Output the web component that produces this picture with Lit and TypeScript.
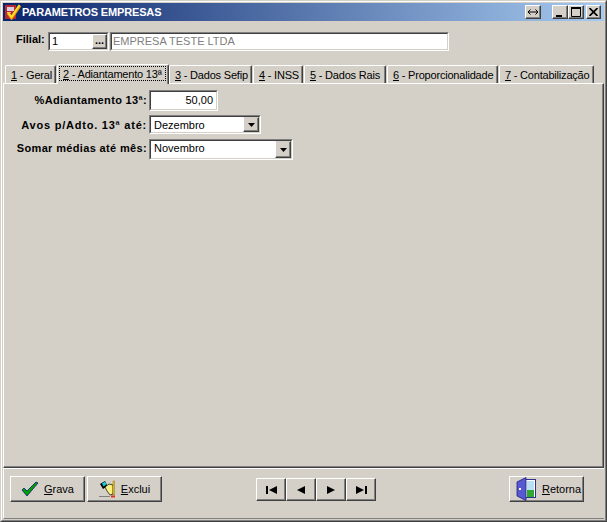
import { LitElement, html, css } from "lit";
import { customElement } from "lit/decorators.js";

const tabs = [
  ["1", "\u00a0- Geral", 51],
  ["2", "\u00a0- Adiantamento 13ª", 112],
  ["3", "\u00a0- Dados Sefip", 83],
  ["4", "\u00a0- INSS", 50],
  ["5", "\u00a0- Dados Rais", 82],
  ["6", "\u00a0- Proporcionalidade", 111],
  ["7", "\u00a0- Contabilização", 95],
] as const;

@customElement("app-root")
export class AppRoot extends LitElement {
  static styles = css`
    :host { display: block; width: 607px; height: 522px; font-family: "Liberation Sans", Arial, sans-serif; font-size: 11px; color: #000; }
    * { box-sizing: border-box; }
    .win { width: 607px; height: 522px; background: #d4d0c8; border: 1px solid; border-color: #d4d0c8 #404040 #404040 #d4d0c8; display: flex; }
    .win2 { flex: 1; border: 1px solid; border-color: #fff #808080 #808080 #fff; padding: 1px; display: flex; flex-direction: column; min-width: 0; }
    .title { height: 18px; flex: none; background: linear-gradient(90deg, #0a246a, #a6caf0); display: flex; align-items: center; padding: 0 3px 0 2px; color: #fff; font-weight: bold; font-size: 11px; }
    .title svg.logo { flex: none; margin-right: 1px; }
    .ttext { flex: 1; letter-spacing: -0.15px; }
    .wbtn { width: 16px; height: 14px; background: #d4d0c8; border: 1px solid; border-color: #fff #404040 #404040 #fff; box-shadow: inset -1px -1px 0 #808080; display: flex; align-items: center; justify-content: center; flex: none; }
    .wbtn.res { margin-right: 11px; }
    .wbtn.cl { margin-left: 2px; width: 15px; }
    .filial { height: 19px; margin: 11px 0 0 13px; display: flex; flex: none; align-items: center; }
    .filial label { width: 32px; font-weight: bold; font-size: 11px; margin-bottom: 5px; }
    .sunk { border: 1px solid; border-color: #808080 #fff #fff #808080; background: #fff; }
    .sunk > .in { border: 1px solid; border-color: #404040 #d4d0c8 #d4d0c8 #404040; height: 100%; display: flex; align-items: center; padding-left: 1px; overflow: hidden; font-size: 11px; }
    .sunk > .in > span { margin-bottom: 2px; }
    .v2 > .in > span { margin-bottom: 0; }
    .v3 > .in > span { margin-bottom: 4px; }
    .f1 { width: 61px; height: 19px; }
    .f1 .in { justify-content: space-between; padding-left: 2px; }
    .dots { width: 15px; height: 15px; background: #d4d0c8; border: 1px solid; border-color: #fff #404040 #404040 #fff; box-shadow: inset -1px -1px 0 #808080; font-weight: bold; font-size: 11px; line-height: 9px; display: flex; align-items: center; justify-content: center; padding-bottom: 3px; flex: none; }
    .f2 { width: 339px; height: 19px; margin-left: 1px; color: #808080; }
    .f2 .in { padding-left: 1px; }
    .tabs { display: flex; height: 20px; margin: 12px 0 0 2px; align-items: flex-end; flex: none; position: relative; z-index: 1; font-size: 11px; letter-spacing: -0.2px; }
    .tab { height: 18px; background: #d4d0c8; border-top: 1px solid #fff; border-left: 1px solid #fff; border-right: 1px solid #404040; box-shadow: inset -1px 0 0 #808080; border-radius: 2px 2px 0 0; display: flex; align-items: center; padding-left: 5px; white-space: nowrap; flex: none; margin-right: 1px; }
    .tab.on { height: 20px; margin: 0 0 -1px 0; padding-left: 1px; }
    .tab.on .fc { border: 1px dotted #000; height: 15px; display: flex; align-items: center; padding: 0 3px; margin-top: -2px; }
    .page { flex: 1; min-height: 0; border: 1px solid; border-color: #fff #404040 #404040 #fff; box-shadow: inset -1px -1px 0 #808080; padding: 6px 0 0 0; display: grid; grid-template-columns: 145px auto 1fr; grid-auto-rows: min-content; }
    .lb { font-weight: bold; text-align: right; white-space: nowrap; font-size: 11px; letter-spacing: 0.35px; align-self: center; padding: 0 2px 4px 0; }
    .lb.top { padding-bottom: 6px; }
    .lb.wide { letter-spacing: 0.78px; }
    .page .sunk { grid-column: 2; }
    .v1 { width: 69px; height: 21px; margin-bottom: 4px; }
    .v1 .in { justify-content: flex-end; padding-right: 3px; }
    .v2 { width: 112px; height: 19px; margin-bottom: 5px; }
    .v3 { width: 144px; height: 21px; }
    .sel .in { justify-content: space-between; padding-left: 3px; }
    .arrow { width: 16px; height: 15px; flex: none; background: #d4d0c8; border: 1px solid; border-color: #d4d0c8 #404040 #404040 #fff; box-shadow: inset -1px -1px 0 #808080; display: flex; align-items: center; justify-content: center; }
    .v3 .arrow { height: 17px; }
    .bar { height: 51px; flex: none; border-top: 1px solid #fff; border-left: 1px solid #fff; border-bottom: 1px solid #808080; padding: 7px 20px 0 6px; display: flex; align-items: flex-start; }
    .bb { height: 26px; width: 75px; background: #d4d0c8; border: 1px solid; border-color: #fff #404040 #404040 #fff; box-shadow: inset -1px -1px 0 #808080; display: flex; align-items: center; justify-content: center; gap: 5px; font-size: 11px; flex: none; }
    .bb + .bb { margin-left: 2px; }
    .bb.exc { gap: 4px; }
    .bb.ret { padding-left: 4px; gap: 6px; }
    .nav { display: flex; margin: 2px 0 0 94px; flex: 1; }
    .nb { width: 30px; height: 23px; background: #d4d0c8; border: 1px solid; border-color: #fff #404040 #404040 #fff; box-shadow: inset -1px -1px 0 #808080; display: flex; align-items: center; justify-content: center; flex: none; }
  `;

  private arrow() {
    return html`<svg width="7" height="4" viewBox="0 0 7 4"><path d="M0 0h7L3.500 4z" fill="#000"/></svg>`;
  }

  render() {
    return html`<div class="win"><div class="win2">
      <div class="title">
        <svg class="logo" width="16" height="16" viewBox="0 0 16 16">
          <rect x="0" y="1" width="11" height="14" fill="#b82830"/>
          <rect x="2" y="3" width="7" height="4" fill="#d8d0e0"/>
          <rect x="2" y="8" width="4" height="1" fill="#f0a0a0"/>
          <path d="M3 9l3.500 5L15 1.500" fill="none" stroke="#e89018" stroke-width="3"/>
          <path d="M3 8.500l3.500 4.500L14.500 1" fill="none" stroke="#ffe020" stroke-width="2"/>
        </svg>
        <span class="ttext">PARAMETROS EMPRESAS</span>
        <div class="wbtn res"><svg width="10" height="6" viewBox="0 0 10 6"><path d="M0 3h10M2.500.5L0 3l2.500 2.500M7.500.5L10 3 7.500 5.500" fill="none" stroke="#000"/></svg></div>
        <div class="wbtn"><svg width="10" height="10" viewBox="0 0 10 10"><rect x="1" y="8" width="6" height="2"/></svg></div>
        <div class="wbtn"><svg width="10" height="10" viewBox="0 0 10 10"><path d="M.5 1.500h9v8h-9z" fill="none" stroke="#000"/><rect y="0" width="10" height="2"/></svg></div>
        <div class="wbtn cl"><svg width="9" height="8" viewBox="0 0 9 8"><path d="M.5 0l8 8M8.500 0l-8 8" stroke="#000" stroke-width="1.7"/></svg></div>
      </div>
      <div class="filial">
        <label>Filial:</label>
        <div class="sunk f1"><div class="in"><span>1</span><div class="dots">...</div></div></div>
        <div class="sunk f2"><div class="in"><span>EMPRESA TESTE LTDA</span></div></div>
      </div>
      <div class="tabs">
        ${tabs.map(([n, t, w], i) => i === 1
          ? html`<div class="tab on" style="width:${w}px"><div class="fc"><span><u>${n}</u>${t}</span></div></div>`
          : html`<div class="tab" style="width:${w}px"><span><u>${n}</u>${t}</span></div>`)}
      </div>
      <div class="page">
        <div class="lb top">%Adiantamento 13ª:</div>
        <div class="sunk v1"><div class="in"><span>50,00</span></div></div>
        <div></div>
        <div class="lb wide">Avos p/Adto. 13ª até:</div>
        <div class="sunk v2 sel"><div class="in"><span>Dezembro</span><div class="arrow">${this.arrow()}</div></div></div>
        <div></div>
        <div class="lb">Somar médias até mês:</div>
        <div class="sunk v3 sel"><div class="in"><span>Novembro</span><div class="arrow">${this.arrow()}</div></div></div>
      </div>
      <div class="bar">
        <div class="bb">
          <svg width="18" height="16" viewBox="0 0 18 16"><path d="M1 9l2-2 3 3 9-9 2 1L6 15z" fill="#00a000" stroke="#000080" stroke-width=".7"/></svg>
          <span><u>G</u>rava</span>
        </div>
        <div class="bb exc">
          <svg width="18" height="18" viewBox="0 0 18 18">
            <path d="M1 4l5-3 2.500 5L4 9z" fill="#000"/><path d="M3 3.500l3-2 1.500 3L4.500 6.500z" fill="#18c8d8"/>
            <path d="M6 7l4-3 4 1v9l-3 1-3-4z" fill="#f8f080" stroke="#000" stroke-width=".7"/>
            <path d="M14 1h1.500v14H14z" fill="#e8c820" stroke="#806000" stroke-width=".4"/><path d="M12 15.500h4v2h-4z" fill="#e03020"/><path d="M0 16h11v1H0z" fill="#808080"/>
          </svg>
          <span><u>E</u>xclui</span>
        </div>
        <div class="nav">
          <div class="nb"><svg width="11" height="8" viewBox="0 0 11 8"><path d="M0 0h2v8H0zM11 0v8L3 4z"/></svg></div>
          <div class="nb"><svg width="8" height="8" viewBox="0 0 8 8"><path d="M8 0v8L0 4z"/></svg></div>
          <div class="nb"><svg width="8" height="8" viewBox="0 0 8 8"><path d="M0 0v8l8-4z"/></svg></div>
          <div class="nb"><svg width="11" height="8" viewBox="0 0 11 8"><path d="M0 0v8l8-4zM9 0h2v8H9z"/></svg></div>
        </div>
        <div class="bb ret">
          <svg width="20" height="24" viewBox="0 0 20 24">
            <rect x="9.500" y="2.500" width="10" height="18" fill="#fff" stroke="#303090"/>
            <rect x="11" y="4" width="7" height="9" fill="#b8e0f0"/><rect x="11" y="13" width="7" height="7" fill="#30a830"/>
            <path d="M1 5l9-4.500v23L1 19z" fill="#5858d0" stroke="#202080" stroke-width=".8"/><rect x="3" y="11" width="2" height="2" fill="#fff"/>
          </svg>
          <span><u>R</u>etorna</span>
        </div>
      </div>
    </div></div>`;
  }
}
